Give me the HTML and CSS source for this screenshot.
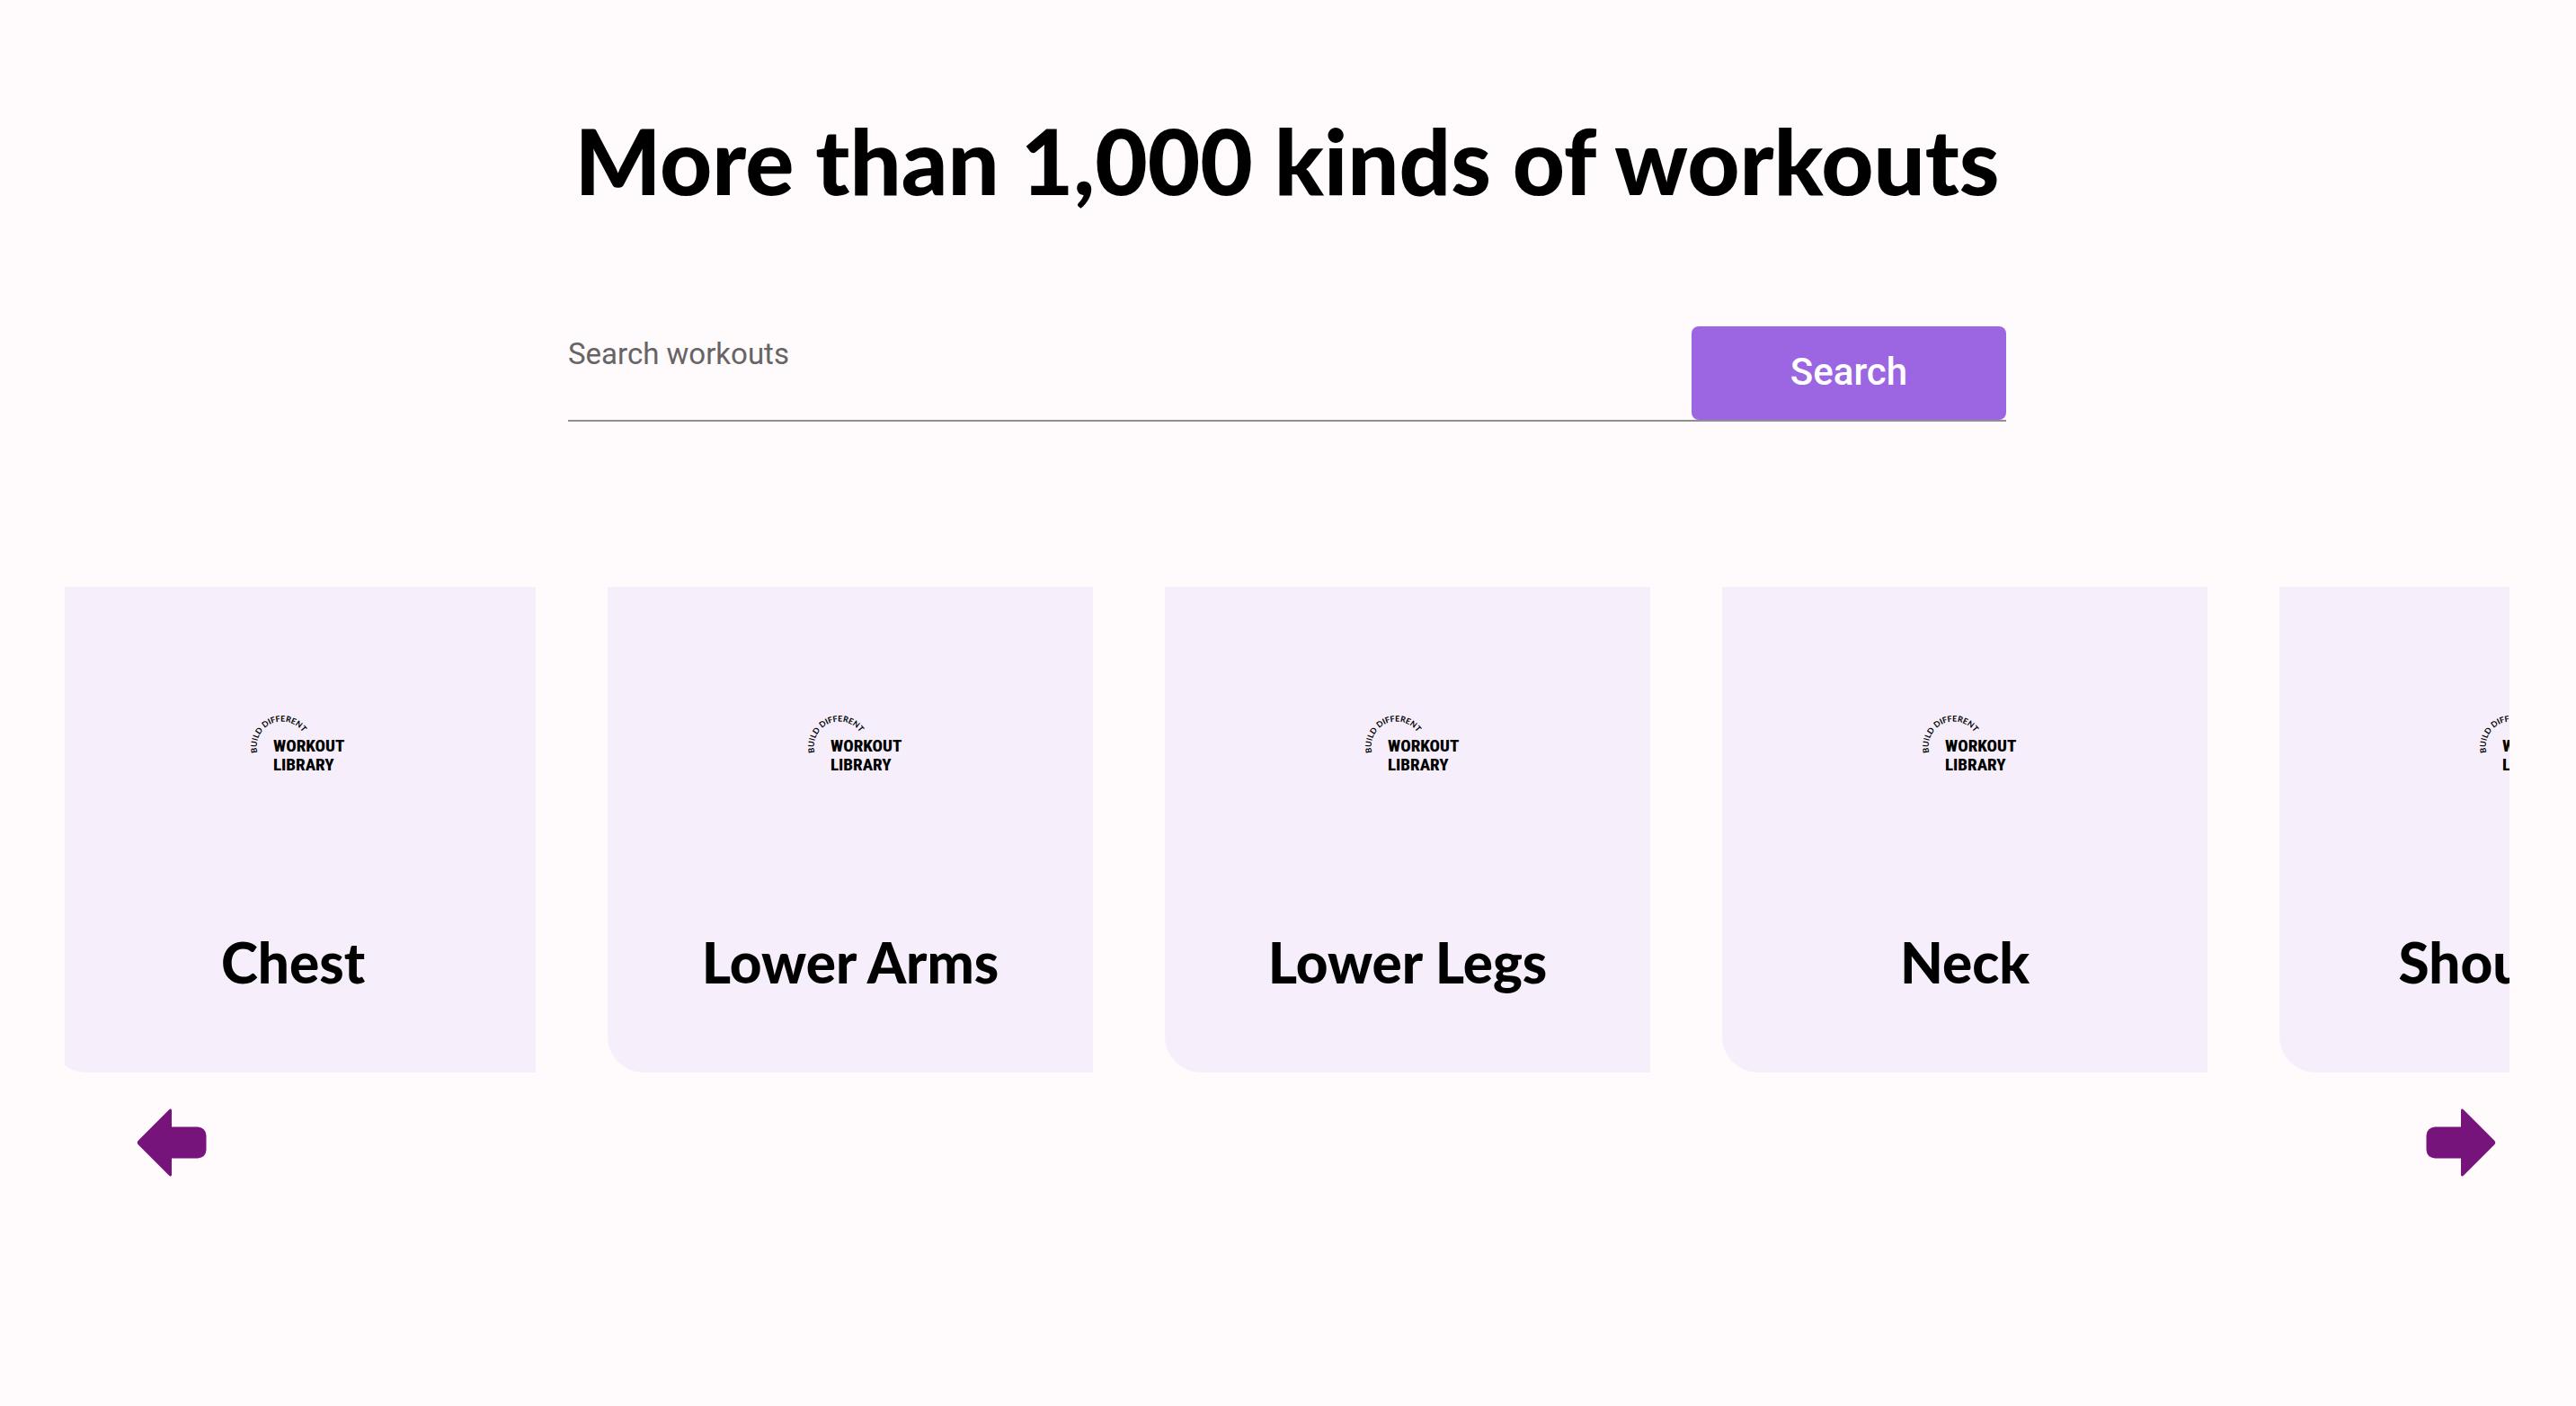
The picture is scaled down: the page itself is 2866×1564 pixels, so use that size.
FILE: index.html
```html
<!DOCTYPE html>
<html lang="en">
<head>
<meta charset="utf-8">
<meta name="viewport" content="width=device-width, initial-scale=1">
<title>Workout Library</title>
<link rel="stylesheet" href="styles.css">
</head>
<body>
<svg class="defs" aria-hidden="true">
  <defs>
    <path id="arc" d="M6.500 45 A28 28 0 0 1 61 32"/>
    <symbol id="logo" viewBox="-16 0 124 72">
      <text class="logo-arc"><textPath href="#arc">BUILD DIFFERENT</textPath></text>
      <text class="logo-name" x="24" y="44">WORKOUT</text>
      <text class="logo-name" x="24" y="65">LIBRARY</text>
    </symbol>
    <symbol id="arrow" viewBox="0 0 78 76">
      <path d="M39 20.500V2Q39.500-.5 42 1.500L76 35.500Q78.500 38 76 40.500L42 74.500Q39.500 76.500 39 74V55.500H10Q1 54.500 .5 46V30Q1 21.500 10 20.500Z"/>
    </symbol>
  </defs>
</svg>
<main class="page">
  <h1 class="title">More than 1,000 kinds of workouts</h1>
  <form class="search">
    <input class="search-input" type="text" placeholder="Search workouts" aria-label="Search workouts">
    <button class="search-button" type="submit">Search</button>
  </form>
  <section class="carousel" aria-label="Body parts">
    <div class="track">
      <article class="card"><svg class="logo" role="img" aria-label="Workout Library"><use href="#logo"/></svg><h2 class="card-title">Chest</h2></article>
      <article class="card"><svg class="logo" role="img" aria-label="Workout Library"><use href="#logo"/></svg><h2 class="card-title">Lower Arms</h2></article>
      <article class="card"><svg class="logo" role="img" aria-label="Workout Library"><use href="#logo"/></svg><h2 class="card-title">Lower Legs</h2></article>
      <article class="card"><svg class="logo" role="img" aria-label="Workout Library"><use href="#logo"/></svg><h2 class="card-title">Neck</h2></article>
      <article class="card"><svg class="logo" role="img" aria-label="Workout Library"><use href="#logo"/></svg><h2 class="card-title">Shoulders</h2></article>
    </div>
    <div class="controls">
      <button class="arrow" type="button" aria-label="Previous"><svg class="arrow-icon arrow-left"><use href="#arrow"/></svg></button>
      <button class="arrow" type="button" aria-label="Next"><svg class="arrow-icon"><use href="#arrow"/></svg></button>
    </div>
  </section>
</main>
</body>
</html>
```
FILE: styles.css
```css
* { box-sizing: border-box; }
body {
  margin: 0;
  background: #fffafb;
  color: #000;
  font-family: Roboto, "Liberation Sans", sans-serif;
}
.defs { position: absolute; width: 0; height: 0; }
.page { padding: 118px 74px 0 72px; }
.title {
  margin: 0;
  font: 900 101px/120px Lato, sans-serif;
  text-align: center;
}
.search {
  display: flex;
  align-items: flex-start;
  width: 100%;
  max-width: 1600px;
  margin: 125px auto 0;
  border-bottom: 2px solid #918e8f;
}
.search-input {
  flex: 1;
  min-width: 0;
  height: 62px;
  padding: 0;
  border: 0;
  outline: 0;
  background: none;
  font: 400 33px/62px Roboto, sans-serif;
}
.search-input::placeholder { color: #666465; opacity: 1; }
.search-button {
  width: 350px;
  height: 104px;
  padding: 0 0 2px;
  border: 0;
  border-radius: 8px;
  background: #9c66e2;
  color: #fff;
  font: 500 42px/102px Roboto, sans-serif;
}
.carousel { margin-top: 184px; overflow: hidden; }
.track { display: flex; gap: 80px; margin-left: -16px; }
.card {
  flex: 0 0 540px;
  height: 540px;
  display: flex;
  flex-direction: column;
  align-items: center;
  padding-top: 139px;
  border-bottom-left-radius: 40px;
  background: #f6effb;
}
.logo { width: 124px; height: 72px; }
.logo-arc { font: 700 9px Lato, sans-serif; }
.logo-name { font: 800 19px "Roboto Condensed", "Open Sans Condensed", Roboto, sans-serif; }
.card-title {
  margin: 166px 0 0;
  font: 900 62px/80px Lato, sans-serif;
  white-space: nowrap;
}
.controls {
  display: flex;
  justify-content: space-between;
  padding: 40px 15px 40px 80px;
}
.arrow { display: flex; padding: 0; border: 0; background: none; color: #76147c; }
.arrow-icon { width: 78px; height: 76px; fill: currentColor; }
.arrow-left { transform: rotate(180deg); }
```
